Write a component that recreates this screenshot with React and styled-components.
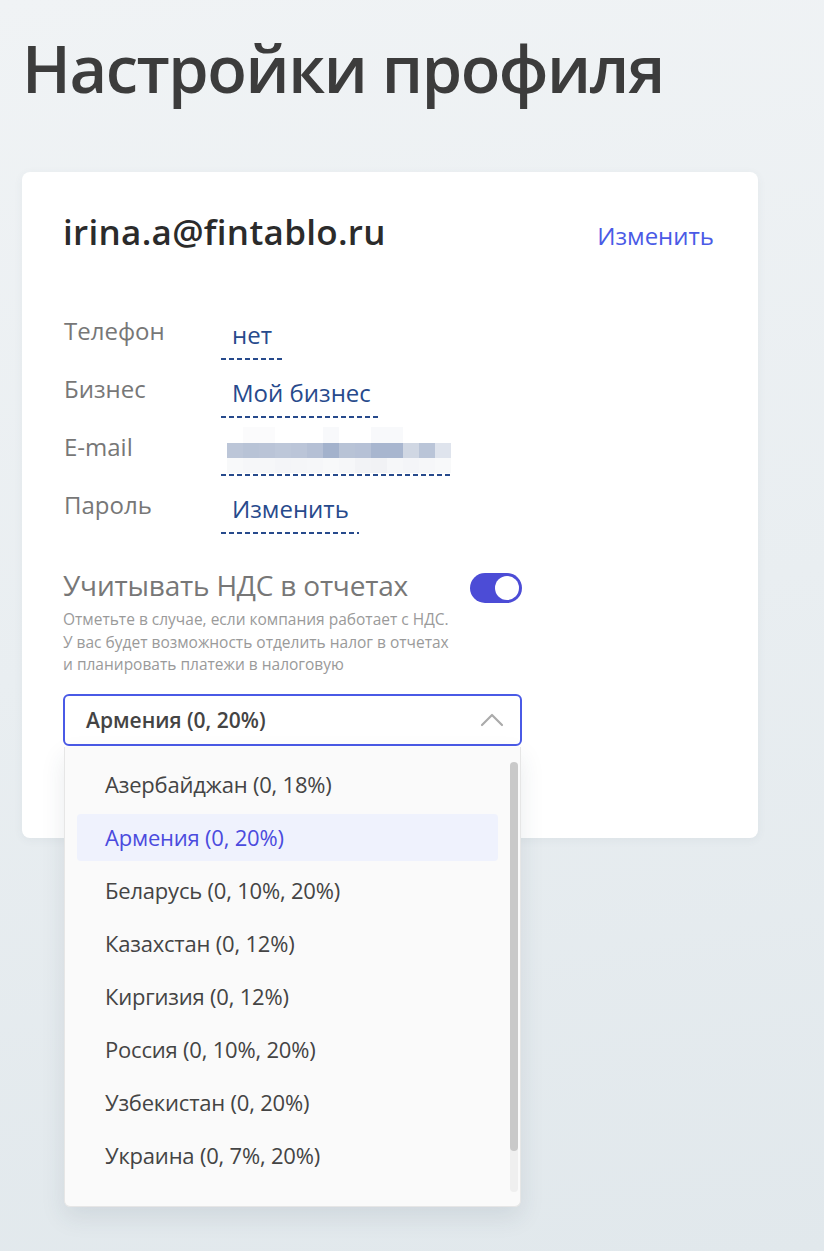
import React from "react";
import styled, { createGlobalStyle } from "styled-components";

const Global = createGlobalStyle`
  * { box-sizing: border-box; }
  html, body { margin: 0; padding: 0; }
  body {
    font-family: "Open Sans", "Noto Sans", sans-serif;
    background: linear-gradient(172deg, #f0f3f5 0%, #e9eef1 50%, #e1e8ec 100%);
    min-height: 1251px;
  }
`;

const Page = styled.div`
  width: 824px;
  min-height: 1251px;
  padding: 34px 22px 0 22px;
`;

const Title = styled.h1`
  margin: 0 0 70px 0;
  font-size: 65px;
  line-height: 68px;
  font-weight: 600;
  color: #3c3c3c;
  letter-spacing: -1.45px;
`;

const Card = styled.div`
  position: relative;
  width: 736px;
  height: 666px;
  background: #fff;
  border-radius: 8px;
  box-shadow: 0 2px 10px rgba(60, 80, 100, 0.06);
  padding: 36px 44px 0 41px;
`;

const Header = styled.div`
  display: flex;
  justify-content: space-between;
  align-items: baseline;
  height: 52px;
`;

const Email = styled.div`
  font-size: 35px;
  line-height: 48px;
  font-weight: 600;
  color: #2b2b2b;
  letter-spacing: 0.3px;
`;

const Link = styled.a`
  font-size: 24px;
  font-weight: 500;
  color: #4a5ae6;
  text-decoration: none;
`;

const Rows = styled.div`
  display: flex;
  flex-direction: column;
  gap: 22px;
  margin-top: 64px;
`;

const Row = styled.div`
  display: flex;
  align-items: flex-start;
  height: 36px;
`;

const Label = styled.div`
  width: 158px;
  margin-top: -3px;
  font-size: 24px;
  line-height: 20px;
  color: #777;
  padding-left: 1px;
`;

const Value = styled.div`
  height: 36px;
  padding: 0 10px 0 11px;
  font-size: 24px;
  line-height: 22px;
  font-weight: 500;
  color: #274a8c;
  background-image: linear-gradient(to right, #274a8c 60%, transparent 60%);
  background-size: 8px 2px;
  background-repeat: repeat-x;
  background-position: left bottom;
`;

const Mosaic = styled.div`
  display: flex;
  flex-direction: column;
  width: 230px;
  height: 49px;
  margin-top: -13px;
  padding: 0 0 0 6px;
  background-image: linear-gradient(to right, #274a8c 60%, transparent 60%);
  background-size: 8px 2px;
  background-repeat: repeat-x;
  background-position: left bottom;
`;

const MosaicRow = styled.div`
  display: flex;
  height: ${(p) => p.$h}px;
`;

const Cell = styled.div`
  width: 16px;
  height: 100%;
  background: ${(p) => p.$c};
`;

const VatBlock = styled.div`
  width: 459px;
  margin-top: 39px;
`;

const VatHead = styled.div`
  display: flex;
  justify-content: space-between;
  align-items: center;
  height: 30px;
`;

const VatTitle = styled.div`
  font-size: 28px;
  line-height: 30px;
  margin-bottom: 6px;
  font-weight: 500;
  color: #777;
  letter-spacing: -0.2px;
`;

const Toggle = styled.div`
  width: 52px;
  height: 30px;
  border-radius: 15px;
  background: #4c4cd6;
  padding: 3px;
  display: flex;
  justify-content: flex-end;
`;

const Knob = styled.div`
  width: 24px;
  height: 24px;
  border-radius: 50%;
  background: #fff;
`;

const Hint = styled.p`
  margin: 5px 0 0 0;
  font-size: 15.5px;
  line-height: 22.5px;
  color: #9a9a9a;
  font-weight: 500;
  white-space: nowrap;
`;

const SelectWrap = styled.div`
  position: relative;
  margin-top: 18px;
  width: 459px;
`;

const SelectBox = styled.div`
  height: 52px;
  border: 2px solid #4a5ae6;
  border-radius: 6px;
  display: flex;
  align-items: center;
  justify-content: space-between;
  padding: 0 16px 0 21px;
`;

const SelectText = styled.span`
  font-size: 21px;
  font-weight: 600;
  color: #444;
`;

const Dropdown = styled.div`
  position: absolute;
  left: 1px;
  top: 53px;
  width: 457px;
  height: 460px;
  background: #fafafa;
  border: 1px solid #e6e6e6;
  border-top: none;
  border-radius: 0 0 6px 6px;
  box-shadow: 0 10px 24px rgba(40, 60, 80, 0.1);
  display: flex;
  overflow: hidden;
`;

const List = styled.ul`
  list-style: none;
  margin: 0;
  padding: 14px 12px 0 12px;
  flex: 1;
  display: flex;
  flex-direction: column;
  gap: 6px;
`;

const Item = styled.li`
  flex-shrink: 0;
  height: 47px;
  border-radius: 4px;
  display: flex;
  align-items: center;
  padding-left: 28px;
  font-size: 22px;
  font-weight: 500;
  letter-spacing: -0.2px;
  color: ${(p) => (p.$active ? "#4b4bde" : "#444")};
  background: ${(p) => (p.$active ? "#eff2fd" : "transparent")};
`;

const Track = styled.div`
  width: 8px;
  margin: 15px 2px 14px 0;
  border-radius: 4px;
  background: #efefef;
  display: flex;
  flex-direction: column;
`;

const Thumb = styled.div`
  height: 389px;
  border-radius: 4px;
  background: #c9c9c9;
`;

const middle = [
  "#bcc6d8", "#b8c3d6", "#bac4d7", "#bdc7d9", "#bbc5d8", "#b5c0d5", "#a3b2cc",
  "#b8c3d6", "#b6c1d6", "#a8b6cf", "#a8b6cf", "#d0d7e3", "#bac5d8", "#dfe4ed",
];
const top = [
  "#ffffff", "#fbfbfc", "#fbfbfc", "#ffffff", "#ffffff", "#ffffff", "#f8f9fb",
  "#ffffff", "#ffffff", "#f8f9fb", "#f8f9fb", "#ffffff", "#ffffff", "#ffffff",
];
const bottom = [
  "#f8f9fa", "#f6f7f9", "#f6f7f9", "#f4f5f8", "#f5f6f8", "#f6f7f9", "#f8f9fa",
  "#f6f7f9", "#f2f3f6", "#f1f2f5", "#f6f7f9", "#f4f5f8", "#f6f7f9", "#f8f9fa",
];

const countries = [
  "Азербайджан (0, 18%)",
  "Армения (0, 20%)",
  "Беларусь (0, 10%, 20%)",
  "Казахстан (0, 12%)",
  "Киргизия (0, 12%)",
  "Россия (0, 10%, 20%)",
  "Узбекистан (0, 20%)",
  "Украина (0, 7%, 20%)",
];

export default function App() {
  return (
    <>
      <Global />
      <Page>
        <Title>Настройки профиля</Title>
        <Card>
          <Header>
            <Email>irina.a@fintablo.ru</Email>
            <Link href="#">Изменить</Link>
          </Header>
          <Rows>
            <Row>
              <Label>Телефон</Label>
              <Value>нет</Value>
            </Row>
            <Row>
              <Label>Бизнес</Label>
              <Value>Мой бизнес</Value>
            </Row>
            <Row>
              <Label>E-mail</Label>
              <Mosaic>
                <MosaicRow $h={16}>
                  {top.map((c, i) => (
                    <Cell key={i} $c={c} />
                  ))}
                </MosaicRow>
                <MosaicRow $h={15}>
                  {middle.map((c, i) => (
                    <Cell key={i} $c={c} />
                  ))}
                </MosaicRow>
                <MosaicRow $h={15}>
                  {bottom.map((c, i) => (
                    <Cell key={i} $c={c} />
                  ))}
                </MosaicRow>
              </Mosaic>
            </Row>
            <Row>
              <Label>Пароль</Label>
              <Value>Изменить</Value>
            </Row>
          </Rows>
          <VatBlock>
            <VatHead>
              <VatTitle>Учитывать НДС в отчетах</VatTitle>
              <Toggle>
                <Knob />
              </Toggle>
            </VatHead>
            <Hint>
              Отметьте в случае, если компания работает с НДС.
              <br />
              У вас будет возможность отделить налог в отчетах
              <br />
              и планировать платежи в налоговую
            </Hint>
          </VatBlock>
          <SelectWrap>
            <SelectBox>
              <SelectText>Армения (0, 20%)</SelectText>
              <svg width="24" height="16" viewBox="0 0 24 16" fill="none">
                <path d="M2 13 L12 3 L22 13" stroke="#ababab" strokeWidth="2.2" strokeLinecap="round" strokeLinejoin="round" />
              </svg>
            </SelectBox>
            <Dropdown>
              <List>
                {countries.map((c) => (
                  <Item key={c} $active={c === "Армения (0, 20%)"}>
                    {c}
                  </Item>
                ))}
              </List>
              <Track>
                <Thumb />
              </Track>
            </Dropdown>
          </SelectWrap>
        </Card>
      </Page>
    </>
  );
}
